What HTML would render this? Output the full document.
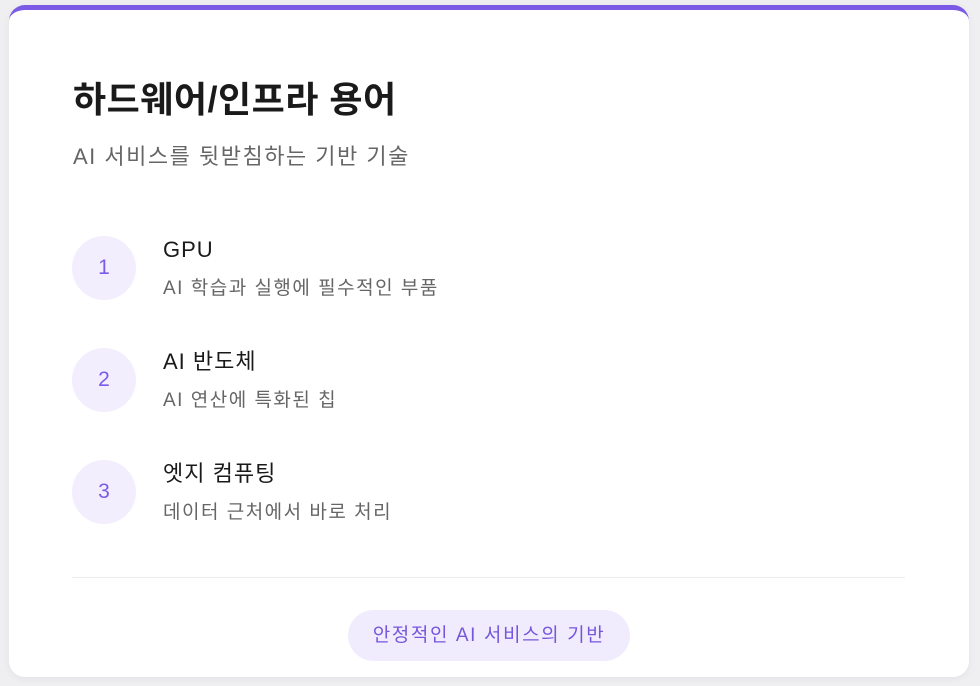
<!DOCTYPE html>
<html><head><meta charset="utf-8"><style>
body{margin:0;width:980px;height:686px;background:#efeff1;font-family:"Liberation Sans","Noto Sans CJK KR",sans-serif;overflow:hidden}
.card{position:absolute;left:9px;top:5px;width:960px;height:672px;background:#fff;border-radius:16px;border-top:5px solid #7b5be6;box-sizing:border-box;box-shadow:0 2px 8px rgba(0,0,0,.05)}
h1{position:absolute;left:64px;top:66px;margin:0;font-size:36px;font-weight:700;color:#1a1a1a;line-height:48px;letter-spacing:0.5px}
.sub{position:absolute;left:64px;top:132px;font-size:22px;color:#666;line-height:30px;letter-spacing:1.5px}
.item{position:absolute;left:63px;width:600px;height:64px}
.c{position:absolute;left:0;top:0;width:64px;height:64px;border-radius:50%;background:#f2eefd;color:#7b5be6;font-size:21px;text-align:center;line-height:64px}
.t{position:absolute;left:91px;top:-1px;font-size:22px;color:#1a1a1a;line-height:30px;letter-spacing:1px}
.d{position:absolute;left:91px;top:40px;font-size:19px;color:#666;line-height:26px;letter-spacing:1.5px}
.hr{position:absolute;left:63px;top:567px;width:833px;height:1px;background:#ececec}
.pill{position:absolute;left:339px;top:600px;width:282px;height:51px;border-radius:26px;background:#f1ecfd;color:#7656dc;font-size:19px;text-align:center;line-height:51px;letter-spacing:1.6px}
</style></head><body>
<div class="card">
<h1>하드웨어/인프라 용어</h1>
<div class="sub">AI 서비스를 뒷받침하는 기반 기술</div>
<div class="item" style="top:226px"><div class="c">1</div><div class="t">GPU</div><div class="d">AI 학습과 실행에 필수적인 부품</div></div>
<div class="item" style="top:338px"><div class="c">2</div><div class="t">AI 반도체</div><div class="d">AI 연산에 특화된 칩</div></div>
<div class="item" style="top:450px"><div class="c">3</div><div class="t">엣지 컴퓨팅</div><div class="d">데이터 근처에서 바로 처리</div></div>
<div class="hr"></div>
<div class="pill">안정적인 AI 서비스의 기반</div>
</div>
</body></html>
